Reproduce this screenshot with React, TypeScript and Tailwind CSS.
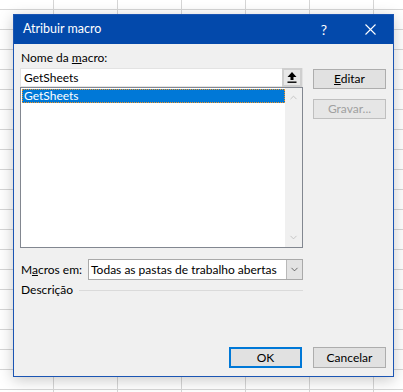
import { FiChevronDown, FiChevronUp } from "react-icons/fi"

const font = "font-['Lato',sans-serif]"

export default function App() {
    return (
        <div className={`w-[403px] h-[392px] overflow-hidden bg-white bg-[linear-gradient(to_right,#d6d6d6_1px,transparent_1px),linear-gradient(to_bottom,#d6d6d6_1px,transparent_1px)] bg-[size:64px_20px] bg-[position:53px_9px] pt-[14px] pl-[13px] whitespace-nowrap ${font}`}>
            <div className="w-[381px] h-[363px] border border-[#1b55b3] bg-[#f0f0f0] flex flex-col shadow-[0_3px_14px_rgba(0,0,0,0.22)]">
                <TitleBar />
                <div className="flex-1 flex flex-col pl-[6px] pr-[7px] pb-[8px] text-[12px] leading-[16px] text-black">
                    <div className="flex gap-[10px]">
                        <MacroPicker />
                        <div className="w-[73px] flex flex-col gap-[10px] pt-[25px]">
                            <Button label="Editar" hotkey="E" rest="ditar" />
                            <Button label="Gravar..." disabled />
                        </div>
                    </div>
                    <div className="w-[283px] flex items-center mt-[11px] h-[21px]">
                        <span className="w-[68px] pl-[1px]">M<span className="underline">a</span>cros em:</span>
                        <div className="flex-1 h-[21px] flex border border-[#a9a9a9] bg-white">
                            <span className="flex-1 pl-[2px] leading-[19px]">Todas as pastas de trabalho abertas</span>
                            <div className="w-[16px] h-full bg-[#e3e3e3] border-l border-[#b9b9b9] grid place-content-center text-[#333]">
                                <FiChevronDown size={11} strokeWidth={1.5} />
                            </div>
                        </div>
                    </div>
                    <div className="w-[283px] flex items-center gap-[6px] mt-[2px] pl-[1px]">
                        <span>Descrição</span>
                        <div className="flex-1 h-px bg-[#dadada]" />
                    </div>
                    <div className="flex-1" />
                    <div className="flex justify-end gap-[11px]">
                        <button className="w-[73px] h-[21px] border-2 border-[#0078d7] bg-[#e1e1e1] leading-[17px]">OK</button>
                        <button className="w-[73px] h-[21px] border border-[#adadad] bg-[#e1e1e1] leading-[19px]">Cancelar</button>
                    </div>
                </div>
            </div>
        </div>
    )
}

const TitleBar = () => {
    return (
        <div className="h-[29px] bg-[#0349ab] text-white flex items-center pl-[9px]">
            <span className="text-[12.5px] flex-1">Atribuir macro</span>
            <span className="text-[14px] w-[20px] text-center mr-[26px]">?</span>
            <div className="w-[20px] mr-[13px] grid place-content-center">
                <svg width="11" height="11" viewBox="0 0 11 11">
                    <path d="M0.5 0.5 L10.5 10.5 M10.5 0.5 L0.5 10.5" stroke="white" strokeWidth="1.1" />
                </svg>
            </div>
        </div>
    )
}

const MacroPicker = () => {
    return (
        <div className="w-[283px] flex flex-col">
            <div className="pt-[6px] pl-[1px] h-[24px]">
                Nome da <span className="underline">m</span>acro:
            </div>
            <div className="h-[19px] flex bg-white border border-[#e3e3e3]">
                <span className="flex-1 pl-[3px] leading-[17px]">GetSheets</span>
                <div className="w-[20px] h-[19px] -mt-px border-2 border-[#cfcfcf] bg-[#e8e8e8] grid place-content-center">
                    <svg width="10" height="11" viewBox="0 0 10 11">
                        <path d="M5 0 L9.5 5 L6.5 5 L6.5 8 L3.5 8 L3.5 5 L0.5 5 Z" fill="black" />
                        <rect x="0.5" y="9.5" width="9" height="1.4" fill="black" />
                    </svg>
                </div>
            </div>
            <div className="h-[161px] flex border border-[#828790] bg-white">
                <div className="flex-1 pt-[1px] pl-px">
                    <div className="h-[14px] bg-[#0078d7] text-white leading-[13px] pl-[2px] outline-1 outline-dotted outline-[#f29422] -outline-offset-1">
                        GetSheets
                    </div>
                </div>
                <div className="w-[17px] bg-[#f0f0f0] flex flex-col justify-between items-center py-[4px] text-[#c2c2c2]">
                    <FiChevronUp size={11} strokeWidth={2} />
                    <FiChevronDown size={11} strokeWidth={2} />
                </div>
            </div>
        </div>
    )
}

const Button = ({ label, hotkey, rest, disabled }: { label: string, hotkey?: string, rest?: string, disabled?: boolean }) => {
    return (
        <button className={disabled ? "h-[20px] border border-[#bfbfbf] bg-[#e6e6e6] text-[#a0a0a0] leading-[18px]" : "h-[20px] border border-[#adadad] bg-[#e1e1e1] leading-[18px]"}>
            {hotkey ? <><span className="underline">{hotkey}</span>{rest}</> : label}
        </button>
    )
}
